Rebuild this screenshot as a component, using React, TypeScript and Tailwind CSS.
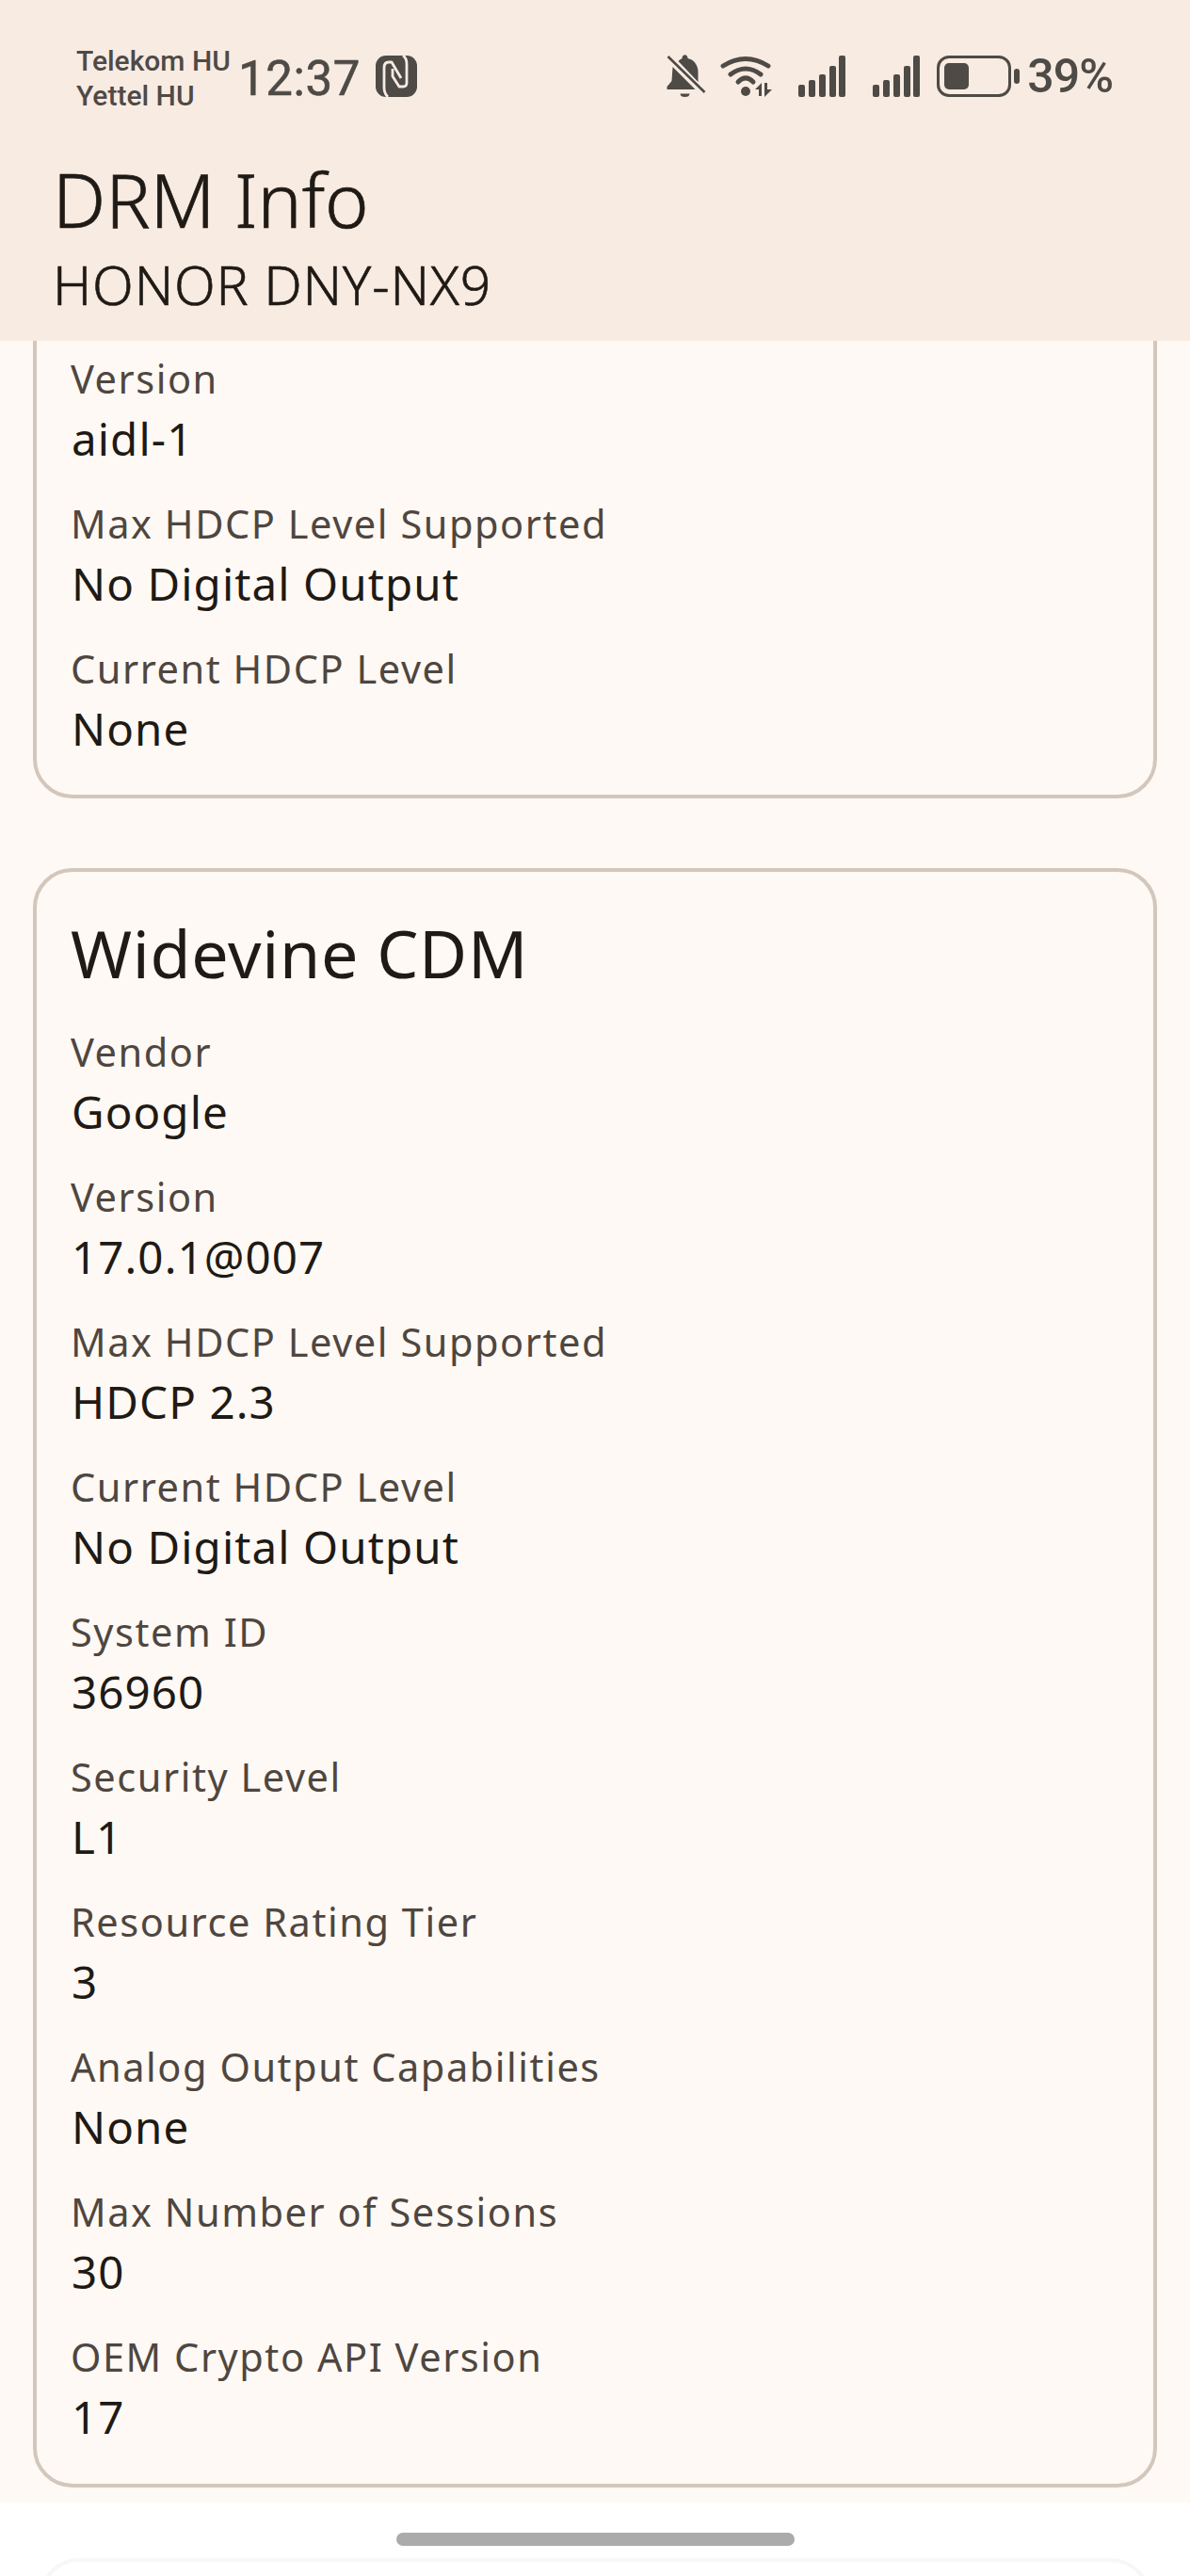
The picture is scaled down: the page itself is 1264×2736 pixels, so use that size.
const awakeRows = [
  { label: "Version", value: "aidl-1" },
  { label: "Max HDCP Level Supported", value: "No Digital Output" },
  { label: "Current HDCP Level", value: "None" },
];

const widevineRows = [
  { label: "Vendor", value: "Google" },
  { label: "Version", value: "17.0.1@007" },
  { label: "Max HDCP Level Supported", value: "HDCP 2.3" },
  { label: "Current HDCP Level", value: "No Digital Output" },
  { label: "System ID", value: "36960" },
  { label: "Security Level", value: "L1" },
  { label: "Resource Rating Tier", value: "3" },
  { label: "Analog Output Capabilities", value: "None" },
  { label: "Max Number of Sessions", value: "30" },
  { label: "OEM Crypto API Version", value: "17" },
];

function InfoRow({ label, value }: { label: string; value: string }) {
  return (
    <div className="flex flex-col pb-[10px]">
      <div className="h-[60px] text-[41.5px] leading-[60px] tracking-[1.55px] text-[#4f4640]">{label}</div>
      <div className="h-[84px] pl-px text-[47.5px] leading-[67px] tracking-[1.1px] text-[#1f1a15]">{value}</div>
    </div>
  );
}

function NfcIcon() {
  return (
    <svg viewBox="0 0 44 44" className="h-[44px] w-[44px]">
      <rect width="44" height="44" rx="11" fill="#4e4a46" />
      <g fill="none" stroke="#f8ebe2" strokeWidth="2.800" strokeLinejoin="round">
        <path d="M13 44c-3-3-4-6-4-10V13c0-4 2-6 5-6h3l10 17" />
        <path d="M29 0c3 2 4 5 4 9v20c0 3-2 4-4 4h-4l-7-11v-8" />
      </g>
    </svg>
  );
}

function BellOffIcon() {
  return (
    <svg viewBox="0 0 41 46" className="h-[46px] w-[44px] fill-[#4e4a46]">
      <path d="M16 4c0-5 6-5 6 0 7 1 11 8 11 14v11L12 7c1-1 2-2 4-3z" />
      <path d="M6 13 30 37H0v-3l5-6z" />
      <path d="M14 41.500h10c0 2.500-2 3.500-5 3.500s-5-1-5-3.500z" />
      <path d="M1 2 40 40" stroke="#4e4a46" strokeWidth="2.600" />
    </svg>
  );
}

function WifiIcon() {
  return (
    <svg viewBox="0 0 56 45" className="h-[45px] w-[56px]">
      <g fill="none" stroke="#4e4a46" strokeWidth="5" strokeLinecap="round">
        <path d="M3 11Q27-4 51 11" />
        <path d="M11 20Q27 8 43 20" />
        <path d="M19 28Q27 20 35 28" />
      </g>
      <circle cx="27" cy="38" r="5" fill="#4e4a46" />
      <path d="M44 29v14h-3v-7h-4zM47 29h3v7h5l-8 8z" fill="#4e4a46" />
    </svg>
  );
}

function SignalIcon() {
  return (
    <div className="flex h-[44px] w-[50px] items-end justify-between">
      <div className="h-[13px] w-[7px] rounded-[2px] bg-[#4e4a46]" />
      <div className="h-[18px] w-[7px] rounded-[2px] bg-[#4e4a46]" />
      <div className="h-[24px] w-[7px] rounded-[2px] bg-[#4e4a46]" />
      <div className="h-[33px] w-[7px] rounded-[2px] bg-[#4e4a46]" />
      <div className="h-[44px] w-[7px] rounded-[2px] bg-[#4e4a46]" />
    </div>
  );
}

function BatteryIcon() {
  return (
    <div className="flex items-center gap-[3px]">
      <div className="flex h-[44px] w-[79px] items-center rounded-[13px] border-[3px] border-[#4e4a46] p-[5px]">
        <div className="h-full w-[26px] rounded-[5px] bg-[#4e4a46]" />
      </div>
      <div className="h-[16px] w-[6px] rounded-[3px] bg-[#4e4a46]" />
    </div>
  );
}

function StatusBar() {
  return (
    <div className="flex h-[157px] items-start justify-between pl-[81px] pr-[82px] pt-[46px] font-['Roboto',sans-serif] text-[#4e4a46]">
      <div className="flex items-start">
        <div className="w-[172px] text-[30px] font-medium leading-[37px]">
          <div>Telekom HU</div>
          <div>Yettel HU</div>
        </div>
        <div className="mt-[13px] text-[51px] leading-[50px] tracking-[0.6px] [-webkit-text-stroke:0.6px_#4e4a46]">12:37</div>
        <div className="ml-[16px] mt-[13px]">
          <NfcIcon />
        </div>
      </div>
      <div className="mt-[12px] flex items-center">
        <BellOffIcon />
        <div className="ml-[14px]">
          <WifiIcon />
        </div>
        <div className="ml-[27px]">
          <SignalIcon />
        </div>
        <div className="ml-[29px]">
          <SignalIcon />
        </div>
        <div className="ml-[18px]">
          <BatteryIcon />
        </div>
        <div className="ml-[8px] text-[50px] font-medium leading-[44px] tracking-[-1px]">39%</div>
      </div>
    </div>
  );
}

export default function App() {
  return (
    <div className="flex h-[2736px] w-full flex-col overflow-hidden bg-white font-['Noto_Sans',sans-serif]">
      <header className="h-[362px] shrink-0 bg-[#f8ebe2] text-[#1f1a15]">
        <StatusBar />
        <div className="pl-[56px] pt-[2px]">
          <div className="text-[79px] font-light leading-[106px] [-webkit-text-stroke:0.7px_#1f1a15]">DRM Info</div>
          <div className="text-[57px] font-light leading-[74px] tracking-[0.8px] [-webkit-text-stroke:0.6px_#1f1a15]">HONOR DNY-NX9</div>
        </div>
      </header>
      <main className="h-[2296px] shrink-0 overflow-hidden bg-[#fef9f4] px-[35px]">
        <section className="mt-[-40px] rounded-[42px] border-[4px] border-[#d3c7bd] px-[36px] pb-[10px] pt-[46px]">
          {awakeRows.map((row) => (
            <InfoRow key={row.label} {...row} />
          ))}
        </section>
        <section className="mt-[74px] rounded-[42px] border-[4px] border-[#d3c7bd] px-[36px] pb-[11px] pt-[38px]">
          <h2 className="mb-[27px] text-[70px] leading-[96px] tracking-[0.7px] text-[#1f1a15]">Widevine CDM</h2>
          {widevineRows.map((row) => (
            <InfoRow key={row.label} {...row} />
          ))}
        </section>
      </main>
      <footer className="flex-1 overflow-hidden bg-white px-[42px]">
        <div className="mx-auto mt-[32px] h-[14px] w-[423px] rounded-full bg-[#ababab]" />
        <div className="mt-[13px] h-[60px] rounded-t-[42px] border-[4px] border-[#f8f7f6]" />
      </footer>
    </div>
  );
}
